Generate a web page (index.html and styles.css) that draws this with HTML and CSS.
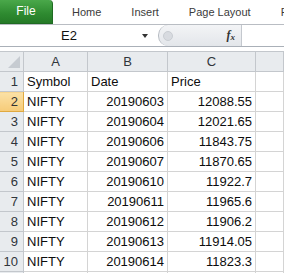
FILE: index.html
```html
<!DOCTYPE html>
<html lang="en">
<head>
    <meta charset="UTF-8">
    <title>Book1 - Excel</title>
    <link rel="stylesheet" href="styles.css">
</head>
<body>
    <div class="tabs">
        <div class="tab file">File</div>
        <div class="tab first">Home</div>
        <div class="tab">Insert</div>
        <div class="tab">Page Layout</div>
        <div class="tab">Fo</div>
    </div>

    <div class="formula-bar">
        <div class="name-box">E2</div>
        <div class="name-drop"><span class="arrow"></span></div>
        <div class="pill"><span class="dot"></span><span class="fx">f<sub>x</sub></span></div>
        <div class="formula-input"></div>
    </div>

    <div class="gap"></div>

    <table class="sheet">
        <tr class="head">
            <th class="corner"><span class="tri"></span></th>
            <th class="col-a">A</th>
            <th class="col-b">B</th>
            <th class="col-c">C</th>
            <th></th>
        </tr>
        <tr><th>1</th><td>Symbol</td><td>Date</td><td>Price</td><td></td></tr>
        <tr><th class="sel">2</th><td>NIFTY</td><td class="num">20190603</td><td class="num">12088.55</td><td></td></tr>
        <tr><th>3</th><td>NIFTY</td><td class="num">20190604</td><td class="num">12021.65</td><td></td></tr>
        <tr><th>4</th><td>NIFTY</td><td class="num">20190606</td><td class="num">11843.75</td><td></td></tr>
        <tr><th>5</th><td>NIFTY</td><td class="num">20190607</td><td class="num">11870.65</td><td></td></tr>
        <tr><th>6</th><td>NIFTY</td><td class="num">20190610</td><td class="num">11922.7</td><td></td></tr>
        <tr><th>7</th><td>NIFTY</td><td class="num">20190611</td><td class="num">11965.6</td><td></td></tr>
        <tr><th>8</th><td>NIFTY</td><td class="num">20190612</td><td class="num">11906.2</td><td></td></tr>
        <tr><th>9</th><td>NIFTY</td><td class="num">20190613</td><td class="num">11914.05</td><td></td></tr>
        <tr><th>10</th><td>NIFTY</td><td class="num">20190614</td><td class="num">11823.3</td><td></td></tr>
        <tr><th></th><td></td><td></td><td></td><td></td></tr>
    </table>
</body>
</html>
```

FILE: styles.css
```css
body {
    margin: 0;
    width: 284px;
    height: 273px;
    overflow: hidden;
    background: #fff;
    font-family: 'Liberation Sans', Arial, sans-serif;
}

/* ribbon tabs */
.tabs {
    display: flex;
    height: 24px;
    border-bottom: 1px solid #b9bdc3;
    background: #fff;
    overflow: hidden;
}

.tab {
    font-size: 11px;
    color: #3b3b3b;
    line-height: 24px;
    padding: 0 15px;
    white-space: nowrap;
}

.tab.first {
    margin-left: 4px;
}

.file {
    width: 53px;
    flex: none;
    box-sizing: border-box;
    padding: 0;
    height: 24px;
    line-height: 23px;
    text-align: center;
    color: #fff;
    font-size: 12px;
    background: linear-gradient(#4aa84a, #2e8a30 60%, #257a27);
    border: 1px solid #1f6b22;
    border-left: none;
    border-top: none;
    border-radius: 0 4px 0 0;
}

/* formula bar */
.formula-bar {
    display: flex;
    height: 21px;
    border-bottom: 1px solid #aab0b8;
    background: #fff;
}

.name-box {
    width: 138px;
    text-align: center;
    font-size: 13px;
    line-height: 21px;
    color: #111;
}

.name-drop {
    width: 20px;
    display: flex;
    align-items: center;
    justify-content: center;
}

.arrow {
    border-left: 3px solid transparent;
    border-right: 3px solid transparent;
    border-top: 4px solid #333;
    margin-left: -6px;
}

.pill {
    width: 84px;
    display: flex;
    align-items: center;
    justify-content: space-between;
    background: linear-gradient(#f3f4f6, #e3e6ea);
    border-left: 1px solid #b6bbc2;
    border-right: 1px solid #c4c8ce;
    border-radius: 10px 0 0 10px;
    padding: 0 6px 0 4px;
    box-sizing: border-box;
}

.dot {
    width: 8px;
    height: 8px;
    border-radius: 50%;
    background: #d8dbe0;
    border: 1px solid #c9cdd2;
}

.fx {
    font-family: 'Liberation Serif', 'Times New Roman', serif;
    font-style: italic;
    font-weight: bold;
    font-size: 12px;
    color: #333;
}

.fx sub {
    font-size: 9px;
    vertical-align: -1px;
}

.formula-input {
    flex: 1;
    background: #fff;
}

.gap {
    height: 4px;
    background: #fff;
}

/* grid */
.sheet {
    border-collapse: collapse;
    table-layout: fixed;
    width: 284px;
    font-size: 13px;
}

.sheet th,
.sheet td {
    height: 19px;
    padding: 0 3px;
    border-right: 1px solid #d4d4d4;
    border-bottom: 1px solid #d4d4d4;
    white-space: nowrap;
    overflow: hidden;
    line-height: 19px;
}

.sheet td {
    color: #0d0d0d;
}

.sheet th {
    font-weight: normal;
    color: #30353b;
    background: #e8ebee;
    border-color: #c3c7cc;
    text-align: right;
    padding-right: 5px;
}

.head th {
    text-align: center;
    border-top: 1px solid #c3c7cc;
    padding: 0;
}

.head th.corner {
    width: 23px;
    position: relative;
}

.tri {
    position: absolute;
    right: 3px;
    bottom: 3px;
    border-left: 12px solid transparent;
    border-bottom: 12px solid #c6cbd1;
}

.col-a { width: 63px; }
.col-b { width: 79px; }
.col-c { width: 87px; }

.sheet th.sel {
    background: linear-gradient(#fbe1a6, #f6cb78);
    border-color: #e0a940;
    color: #333;
}

.num {
    text-align: right;
}
```
